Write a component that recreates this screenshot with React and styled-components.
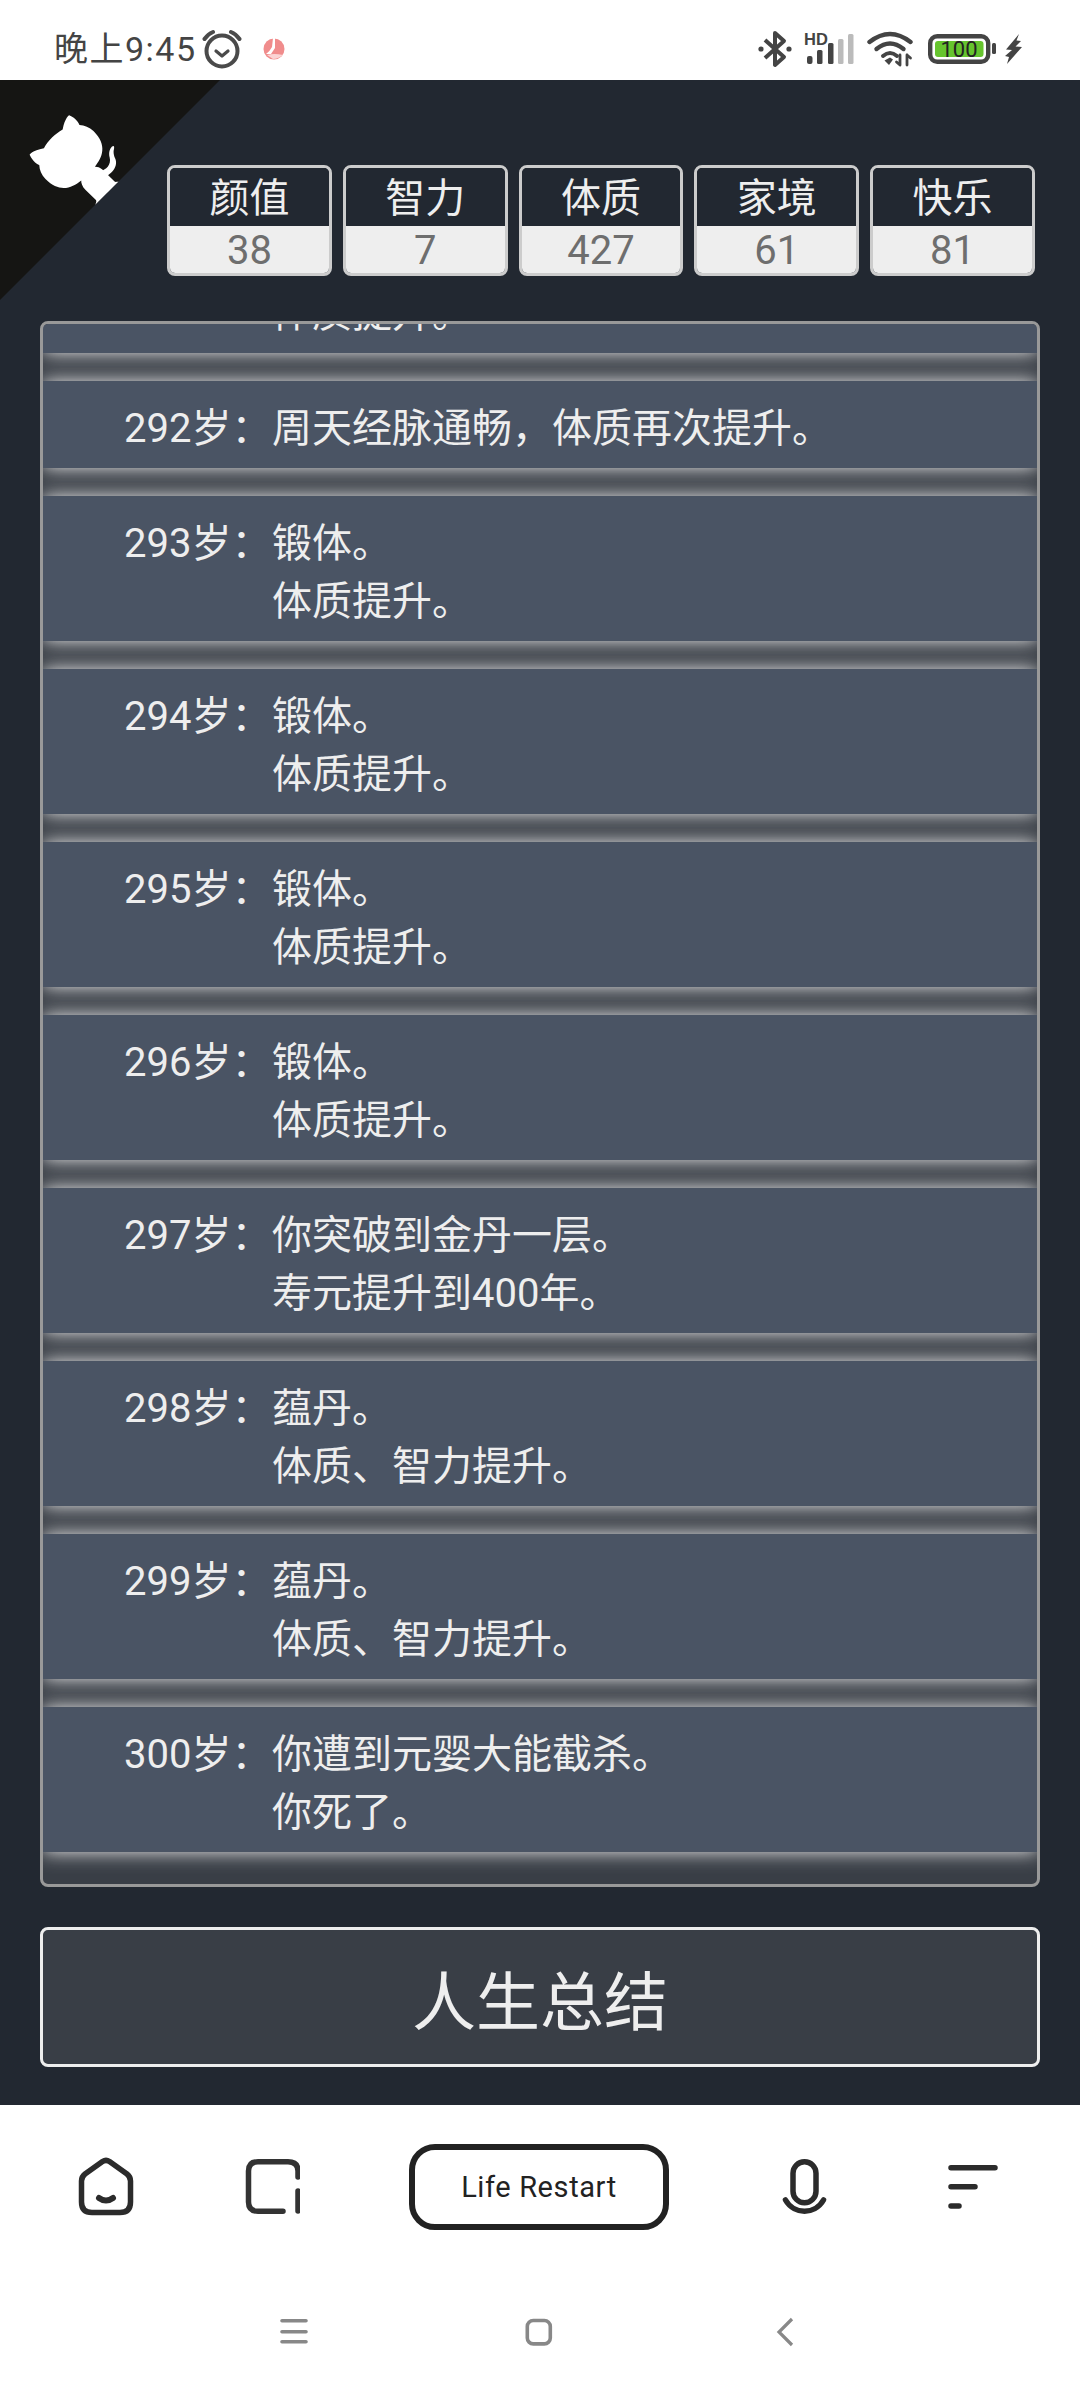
import React from 'react'
import styled, { createGlobalStyle } from 'styled-components'

const GlobalStyle = createGlobalStyle`
  html, body { margin: 0; padding: 0; background: #fff; }
  * { box-sizing: border-box; }
  body { font-family: Roboto, "Noto Sans CJK SC", sans-serif; }
`

const Screen = styled.div`
  width: 1080px;
  height: 2400px;
  display: flex;
  flex-direction: column;
  overflow: hidden;
  position: relative;
`

const StatusBar = styled.div`
  height: 80px;
  flex-shrink: 0;
  display: flex;
  align-items: center;
  justify-content: space-between;
  padding: 17px 58px 0 54px;
  background: #fff;
`
const StatusGroup = styled.div`
  display: flex;
  align-items: center;
`
const Spacer = styled.span`
  width: ${p => p.$w}px;
`
const Clock = styled.span`
  font-size: 34px;
  line-height: 40px;
  color: #444;
  margin-right: 5px;
  letter-spacing: 1.5px;
`
const RecordWrap = styled.span`
  display: flex;
  margin-left: 21px;
`

const Main = styled.main`
  flex: 1;
  min-height: 0;
  display: flex;
  flex-direction: column;
  background: #222831;
  padding: 85px 40px 38px;
`
const Corner = styled.svg`
  position: absolute;
  left: 0;
  top: 80px;
  width: 220px;
  height: 220px;
`
const StatRow = styled.div`
  display: flex;
  gap: 11px;
  padding: 0 5px 0 127px;
  flex-shrink: 0;
`
const StatBox = styled.div`
  flex: 1;
  height: 111px;
  border: 3px solid #ccc;
  border-radius: 8px;
  overflow: hidden;
  text-align: center;
`
const StatName = styled.div`
  height: 58px;
  padding-top: 4px;
  line-height: 54px;
  font-size: 40px;
  color: #eee;
  background: #222831;
`
const StatValue = styled.div`
  height: 47px;
  padding-top: 2px;
  line-height: 45px;
  font-size: 40px;
  color: #6e6e6e;
  background: #eee;
`

const LogList = styled.div`
  flex: 1;
  min-height: 0;
  margin-top: 45px;
  border: 3px solid #999;
  border-radius: 8px;
  background: #393e46;
  overflow: hidden;
  display: flex;
  flex-direction: column;
  justify-content: flex-end;
  gap: 28px;
  padding-bottom: 32px;
`
const LogItem = styled.div`
  flex-shrink: 0;
  display: flex;
  padding: 19px 0 10px 81px;
  background: #4a5464;
  box-shadow: 0 0 18px #eee;
  color: #eee;
  font-size: 40px;
  line-height: 58px;
`
const Age = styled.span`
  flex-shrink: 0;
  width: 148px;
  white-space: pre;
`
const Lines = styled.div`
  display: flex;
  flex-direction: column;
`

const SummaryButton = styled.button`
  flex-shrink: 0;
  height: 140px;
  margin-top: 40px;
  border: 3px solid #eee;
  border-radius: 8px;
  background: #393e46;
  color: #eee;
  font-family: inherit;
  font-size: 64px;
`

const Nav = styled.div`
  flex-shrink: 0;
  height: 295px;
  background: #fff;
  display: flex;
  flex-direction: column;
`
const NavRow = styled.div`
  display: flex;
  align-items: center;
  justify-content: space-between;
  padding: 39px 80px 0 78px;
`
const LifePill = styled.div`
  width: 260px;
  height: 86px;
  border: 6px solid #222;
  border-radius: 26px;
  display: flex;
  align-items: center;
  justify-content: center;
  font-weight: 400;
  font-size: 29px;
  letter-spacing: 0.6px;
  color: #222;
`
const SystemRow = styled.div`
  display: flex;
  align-items: center;
  justify-content: space-between;
  padding: 86px 279px 0 278px;
`

const HomeIcon = () => (
  <svg width="56" height="60" viewBox="0 0 56 60" fill="none" stroke="#2b2b2b" strokeWidth="5.5" strokeLinecap="round" strokeLinejoin="round">
    <path d="M24.5 4.5 Q28 2.2 31.5 4.5 L49 17 Q52.5 19.8 52.5 24 V45 Q52.5 55.5 42 55.5 H14 Q3.5 55.5 3.5 45 V24 Q3.5 19.8 7 17 Z" />
    <path d="M21 41 Q28 46 35 41" strokeWidth="6" />
  </svg>
)
const TabsIcon = () => (
  <svg width="56" height="60" viewBox="0 0 56 60" fill="none" stroke="#333" strokeWidth="5.5" strokeLinecap="round">
    <path d="M54 20 V14 Q54 4.75 44 4.75 H14 Q4.5 4.75 4.5 14 V45 Q4.5 54.25 14 54.25 H39" />
    <path d="M54 34 V54" />
  </svg>
)
const MicIcon = () => (
  <svg width="56" height="60" viewBox="0 0 56 60" fill="none" stroke="#2b2b2b" strokeWidth="5.5" strokeLinecap="round">
    <rect x="14" y="4.75" width="23" height="41" rx="11.5" />
    <path d="M6.5 43 C11 51 19 54.25 25.5 54.25 C32 54.25 40 51 44.5 43" />
  </svg>
)
const FilterIcon = () => (
  <svg width="56" height="60" viewBox="0 0 56 60" fill="none" stroke="#2b2b2b" strokeWidth="5.5" strokeLinecap="round">
    <path d="M7 10.7 H51 M7 29.7 H31 M7 49 H15" />
  </svg>
)
const MenuIcon = () => (
  <svg width="32" height="32" viewBox="0 0 32 32" fill="none" stroke="#888" strokeWidth="3.6" strokeLinecap="round">
    <path d="M4 4.7 H28 M4 15.7 H28 M4 25.7 H28" />
  </svg>
)
const SquareIcon = () => (
  <svg width="32" height="32" viewBox="0 0 32 32" fill="none" stroke="#888" strokeWidth="3.6">
    <rect x="3.3" y="4.5" width="23" height="23.4" rx="6" />
  </svg>
)
const BackIcon = () => (
  <svg width="32" height="32" viewBox="0 0 32 32" fill="none" stroke="#888" strokeWidth="3.2">
    <path d="M23 3 L10 16 L23 29" />
  </svg>
)

const AlarmIcon = () => (
  <svg width="40" height="40" viewBox="0 0 40 40" fill="none" stroke="#4a4a4a" strokeWidth="4" strokeLinecap="round" strokeLinejoin="round">
    <circle cx="20" cy="22" r="15.5" />
    <path d="M14 22 L20 27 L26 22" strokeWidth="3.2" />
    <path d="M2.5 10 Q6 5 11 3" />
    <path d="M37.5 10 Q34 5 29 3" />
  </svg>
)
const RecordDot = () => (
  <svg width="22" height="22" viewBox="0 0 22 22">
    <circle cx="11" cy="11" r="10.5" fill="#f08c8c" />
    <path d="M10 0 H12 V10 L8 16 L3 16 Q7 13 9 9 Z" fill="#fff" />
    <path d="M4 17 Q11 15 20 17 Q15 21 10 21 Z" fill="#fbd4d4" />
  </svg>
)
const BluetoothIcon = () => (
  <svg width="36" height="38" viewBox="0 0 36 38" fill="none" stroke="#444" strokeWidth="4" strokeLinejoin="round">
    <path d="M8 10 L27 27 L18 35 V3 L27 11 L8 28" />
    <circle cx="4" cy="19" r="2.6" fill="#444" stroke="none" />
    <circle cx="32" cy="19" r="2.6" fill="#444" stroke="none" />
  </svg>
)
const SignalIcon = () => (
  <svg width="50" height="34" viewBox="0 0 50 34">
    <text x="0" y="13" fontFamily="Liberation Sans" fontWeight="700" fontSize="16.5" fill="#444">HD</text>
    <rect x="3" y="24" width="5.5" height="8" rx="2" fill="#444" />
    <rect x="13" y="18" width="5.5" height="14" rx="1.5" fill="#444" />
    <rect x="24" y="11" width="5.5" height="21" rx="1.5" fill="#444" />
    <rect x="34" y="7" width="5.5" height="25" rx="1.5" fill="#bbb" />
    <rect x="44" y="2" width="5.5" height="30" rx="1.5" fill="#bbb" />
  </svg>
)
const WifiIcon = () => (
  <svg width="46" height="36" viewBox="0 0 46 36" fill="none" stroke="#444" strokeWidth="4.4" strokeLinecap="round">
    <path d="M2.5 11 Q23 -5 43.5 11" />
    <path d="M9.5 18 Q23 7 36.5 18" />
    <path d="M16 25 Q23 19 30 25" strokeWidth="4" />
    <path d="M17.5 29.5 L23 26.5 L26 28.5 L22 34 Z" fill="#444" stroke="none" />
    <path d="M33 24 V34 M33 34 L29.5 31 M40 34 V24 M40 24 L43.5 27" strokeWidth="2.8" />
  </svg>
)
const BatteryIcon = () => (
  <svg width="68" height="30" viewBox="0 0 68 30">
    <rect x="2.2" y="2.2" width="58" height="25.6" rx="7" fill="none" stroke="#444" strokeWidth="4.4" />
    <rect x="7" y="7" width="48.5" height="16" rx="3" fill="#66c42e" />
    <text x="31" y="22.5" textAnchor="middle" fontFamily="Roboto" fontSize="22" fill="#222">100</text>
    <rect x="64" y="9" width="4" height="11" rx="1.5" fill="#444" />
  </svg>
)
const BoltIcon = () => (
  <svg width="17" height="30" viewBox="0 0 17 30">
    <path d="M14 0 L1 15.5 L7 16 L0 22 L4 23 L2 30 L17 13 L10.5 12.5 L16 7 L11.5 6.5 Z" fill="#444" />
  </svg>
)

const stats = [
  ['颜值', 38],
  ['智力', 7],
  ['体质', 427],
  ['家境', 61],
  ['快乐', 81],
]

const log = [
  [291, ['锻体。', '体质提升。']],
  [292, ['周天经脉通畅，体质再次提升。']],
  [293, ['锻体。', '体质提升。']],
  [294, ['锻体。', '体质提升。']],
  [295, ['锻体。', '体质提升。']],
  [296, ['锻体。', '体质提升。']],
  [297, ['你突破到金丹一层。', '寿元提升到400年。']],
  [298, ['蕴丹。', '体质、智力提升。']],
  [299, ['蕴丹。', '体质、智力提升。']],
  [300, ['你遭到元婴大能截杀。', '你死了。']],
]

export default function App() {
  return (
    <Screen>
      <GlobalStyle />
      <StatusBar>
        <StatusGroup>
          <Clock>晚上9:45</Clock>
          <AlarmIcon />
          <RecordWrap><RecordDot /></RecordWrap>
        </StatusGroup>
        <StatusGroup>
          <BluetoothIcon />
          <Spacer $w={11} />
          <SignalIcon />
          <Spacer $w={13} />
          <WifiIcon />
          <Spacer $w={15} />
          <BatteryIcon />
          <Spacer $w={9} />
          <BoltIcon />
        </StatusGroup>
      </StatusBar>

      <Main>
        <StatRow>
          {stats.map(([name, value]) => (
            <StatBox key={name}>
              <StatName>{name}</StatName>
              <StatValue>{value}</StatValue>
            </StatBox>
          ))}
        </StatRow>

        <LogList>
          {log.map(([age, lines]) => (
            <LogItem key={age}>
              <Age>{age}岁：</Age>
              <Lines>
                {lines.map(line => <span key={line}>{line}</span>)}
              </Lines>
            </LogItem>
          ))}
        </LogList>

        <SummaryButton>人生总结</SummaryButton>
      </Main>

      <Nav>
        <NavRow>
          <HomeIcon />
          <TabsIcon />
          <LifePill>Life Restart</LifePill>
          <MicIcon />
          <FilterIcon />
        </NavRow>
        <SystemRow>
          <MenuIcon />
          <SquareIcon />
          <BackIcon />
        </SystemRow>
      </Nav>

      <Corner viewBox="0 0 250 250" aria-hidden="true">
        <g transform="translate(250 0) scale(-1 1)">
          <path d="M0,0 L250,250 L250,0 Z" fill="#151513" />
          <path fill="#fff" d="M128.3,109.0 C113.8,99.7 119.0,89.6 119.0,89.6 C122.0,82.7 120.5,78.6 120.5,78.6 C119.2,72.0 123.4,76.3 123.4,76.3 C127.3,80.9 125.5,87.3 125.5,87.3 C122.9,97.6 130.6,101.9 134.4,103.2" />
          <path fill="#fff" d="M115.0,115.0 C114.9,115.1 118.7,116.5 119.8,115.4 L133.7,101.6 C136.9,99.2 139.9,98.4 142.2,98.6 C133.8,88.0 127.5,74.4 143.8,58.0 C148.5,53.4 154.0,51.2 159.7,51.0 C160.3,49.4 163.2,43.6 171.4,40.1 C171.4,40.1 176.1,42.5 178.8,56.2 C183.1,58.6 187.2,61.8 190.9,65.4 C194.5,69.0 197.7,73.2 200.1,77.6 C213.8,80.2 216.3,84.9 216.3,84.9 C212.7,93.1 206.9,96.0 205.4,96.6 C205.1,102.4 203.0,107.8 198.3,112.5 C181.9,128.9 168.3,122.5 157.7,114.1 C157.9,116.9 156.7,120.9 152.7,124.9 L141.0,136.5 C139.8,137.7 141.6,141.9 141.8,141.8 Z" />
        </g>
      </Corner>
    </Screen>
  )
}
